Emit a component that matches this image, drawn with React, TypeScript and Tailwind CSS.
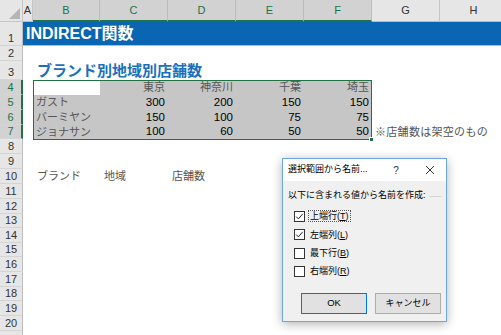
import React from "react";

// Excel sheet with a "Create Names from Selection" dialog on top

const COLS = [
  { key: "A", w: "w-[10px]" },
  { key: "B", w: "w-[67px]" },
  { key: "C", w: "w-[68px]" },
  { key: "D", w: "w-[68px]" },
  { key: "E", w: "w-[68px]" },
  { key: "F", w: "w-[68px]" },
  { key: "G", w: "w-[68px]" },
  { key: "H", w: "w-[68px]" },
];

const SEL_COLS = ["B", "C", "D", "E", "F"];

const ROWS = [
  { n: 1, h: "h-[24px]" },
  { n: 2, h: "h-[15px]" },
  { n: 3, h: "h-[19px]" },
  { n: 4, h: "h-[15px]" },
  { n: 5, h: "h-[15px]" },
  { n: 6, h: "h-[15px]" },
  { n: 7, h: "h-[14px]" },
  { n: 8, h: "h-[15px]" },
  { n: 9, h: "h-[15px]" },
  { n: 10, h: "h-[15px]" },
  { n: 11, h: "h-[15px]" },
  { n: 12, h: "h-[15px]" },
  { n: 13, h: "h-[14px]" },
  { n: 14, h: "h-[15px]" },
  { n: 15, h: "h-[14px]" },
  { n: 16, h: "h-[15px]" },
  { n: 17, h: "h-[15px]" },
  { n: 18, h: "h-[14px]" },
  { n: 19, h: "h-[15px]" },
  { n: 20, h: "h-[15px]" },
  { n: 21, h: "h-[15px]" },
];

const HEAD = ["東京", "神奈川", "千葉", "埼玉"];
const DATA: [string, number[]][] = [
  ["ガスト", [300, 200, 150, 150]],
  ["バーミヤン", [150, 100, 75, 75]],
  ["ジョナサン", [100, 60, 50, 50]],
];

function Cell({ w, className = "", children }: { w: string; className?: string; children?: React.ReactNode }) {
  return <div className={`${w} shrink-0 h-full flex items-center whitespace-nowrap ${className}`}>{children}</div>;
}

function RowContent({ n }: { n: number }) {
  const w = (k: string) => COLS.find((c) => c.key === k)!.w;

  if (n === 1) {
    return (
      <div className="flex-1 h-full bg-[#0a66b2] border-b border-[#9cc2e5] flex items-center pl-[3px] text-white text-[16px] font-bold leading-none whitespace-nowrap">
        INDIRECT関数
      </div>
    );
  }
  if (n === 3) {
    return (
      <div className="flex h-full">
        <Cell w={w("A")} />
        <Cell w={w("B")} className="pl-[4px] pt-[2px] text-[15px] font-bold text-[#1b6fbd]">
          ブランド別地域別店舗数
        </Cell>
      </div>
    );
  }
  if (n === 4) {
    return (
      <div className="flex h-full">
        <Cell w={w("A")} />
        <Cell w={w("B")} className="bg-white" />
        {HEAD.map((t, i) => (
          <Cell key={t} w={w(SEL_COLS[i + 1])} className="bg-[#c6c6c6] justify-end pr-[3px] text-[11px] text-[#555]">
            {t}
          </Cell>
        ))}
      </div>
    );
  }
  if (n >= 5 && n <= 7) {
    const [name, vals] = DATA[n - 5];
    return (
      <div className="flex h-full">
        <Cell w={w("A")} />
        <Cell w={w("B")} className="bg-[#c6c6c6] pl-[3px] text-[11px] text-[#555]">
          {name}
        </Cell>
        {vals.map((v, i) => (
          <Cell key={i} w={w(SEL_COLS[i + 1])} className="bg-[#c6c6c6] justify-end pr-[3px] text-[11.5px] text-black">
            {v}
          </Cell>
        ))}
        {n === 7 && (
          <Cell w={w("G")} className="pl-[3px] text-[11px] text-[#555] tracking-[0.3px]">
            ※店舗数は架空のもの
          </Cell>
        )}
      </div>
    );
  }
  if (n === 10) {
    return (
      <div className="flex h-full text-[11px] text-[#555]">
        <Cell w={w("A")} />
        <Cell w={w("B")} className="pl-[4px]">ブランド</Cell>
        <Cell w={w("C")} className="pl-[4px]">地域</Cell>
        <Cell w={w("D")} className="pl-[4px]">店舗数</Cell>
      </div>
    );
  }
  return <div className="flex-1 h-full" />;
}

function Checkbox({ checked, label, hotkey, focused, h }: { checked: boolean; label: string; hotkey: string; focused?: boolean; h: string }) {
  return (
    <div className={`flex items-center ${h} pl-[11px] gap-[3px]`}>
      <div className="w-[11px] h-[11px] border border-[#333] bg-white flex items-center justify-center">
        {checked && (
          <svg width="9" height="9" viewBox="0 0 9 9">
            <path d="M1.2 4.6 L3.4 6.9 L7.8 1.8" fill="none" stroke="#222" strokeWidth="1" />
          </svg>
        )}
      </div>
      <div className={`px-[1px] leading-[10px] ${focused ? "border border-dotted border-[#555]" : "border border-transparent"}`}>
        {label}(<span className="underline">{hotkey}</span>)
      </div>
    </div>
  );
}

function Dialog() {
  return (
    <div className="absolute left-[282px] top-[158px] w-[165px] h-[164px] border border-[#6aa8de] bg-[#f0f0f0] shadow-[0_2px_10px_rgba(0,0,0,0.3)] flex flex-col text-[9px] text-black">
      <div className="h-[22px] bg-white flex items-center pl-[5px]">
        <span className="w-[102px]">選択範囲から名前...</span>
        <span className="w-[12px] text-center text-[10px] text-[#333]">?</span>
        <span className="ml-[23px]">
          <svg width="10" height="10" viewBox="0 0 10 10">
            <path d="M1 1 L9 9 M9 1 L1 9" stroke="#333" strokeWidth="1" />
          </svg>
        </span>
      </div>
      <div className="flex items-center pl-[5px] pr-[5px] mt-[9px] h-[12px] gap-[3px]">
        <span className="whitespace-nowrap">以下に含まれる値から名前を作成:</span>
        <div className="flex-1 h-px bg-[#d5d5d5]" />
      </div>
      <div className="mt-[5px] flex flex-col">
        <Checkbox checked label="上端行" hotkey="T" focused h="h-[18px]" />
        <Checkbox checked label="左端列" hotkey="L" h="h-[19px]" />
        <Checkbox checked={false} label="最下行" hotkey="B" h="h-[18px]" />
        <Checkbox checked={false} label="右端列" hotkey="R" h="h-[18px]" />
      </div>
      <div className="mt-[13px] flex pl-[18px] gap-[8px]">
        <div className="w-[66px] h-[21px] border border-[#0078d7] bg-[#e1e1e1] flex items-center justify-center text-[9.5px]">OK</div>
        <div className="w-[66px] h-[21px] border border-[#adadad] bg-[#e1e1e1] flex items-center justify-center">キャンセル</div>
      </div>
    </div>
  );
}

export default function App() {
  return (
    <div className="relative w-[501px] h-[335px] overflow-hidden bg-white font-['Liberation_Sans','Noto_Sans_CJK_JP',sans-serif]">
      {/* column headers */}
      <div className="flex h-[22px]">
        <div className="w-[23px] shrink-0 h-full bg-[#e6e6e6] border-r border-b border-[#c6c6c6] flex items-end justify-end p-[2px]">
          <svg width="11" height="11" viewBox="0 0 11 11">
            <path d="M11 0 L11 11 L0 11 Z" fill="#b5b5b5" />
          </svg>
        </div>
        {COLS.map((c) => {
          const sel = SEL_COLS.includes(c.key);
          return (
            <div
              key={c.key}
              className={`${c.w} shrink-0 h-full flex items-center justify-center text-[11px] border-r ${
                sel
                  ? "bg-[#d2d2d2] text-[#217346] border-r-[#bcbcbc] border-b-2 border-b-[#217346]"
                  : "bg-[#e6e6e6] text-[#333] border-r-[#c6c6c6] border-b border-b-[#bdbdbd]"
              }`}
            >
              {c.key}
            </div>
          );
        })}
      </div>

      {/* rows */}
      {ROWS.map((r) => {
        const sel = r.n >= 4 && r.n <= 7;
        return (
          <div key={r.n} className={`flex ${r.h}`}>
            <div
              className={`w-[23px] shrink-0 h-full flex items-end justify-center pb-[1px] text-[11px] leading-[12px] border-b border-b-[#d4d4d4] ${
                sel ? "bg-[#d2d2d2] text-[#217346] border-r-2 border-r-[#217346]" : "bg-[#e6e6e6] text-[#333] border-r border-r-[#bdbdbd]"
              }`}
            >
              {r.n < 21 ? r.n : null}
            </div>
            <RowContent n={r.n} />
          </div>
        );
      })}

      {/* selection border + fill handle */}
      <div className="absolute left-[33px] top-[80px] w-[339px] h-[60px] border border-[#217346] pointer-events-none" />
      <div className="absolute left-[369px] top-[137px] w-[5px] h-[5px] bg-[#217346] border border-white" />

      <Dialog />
    </div>
  );
}
